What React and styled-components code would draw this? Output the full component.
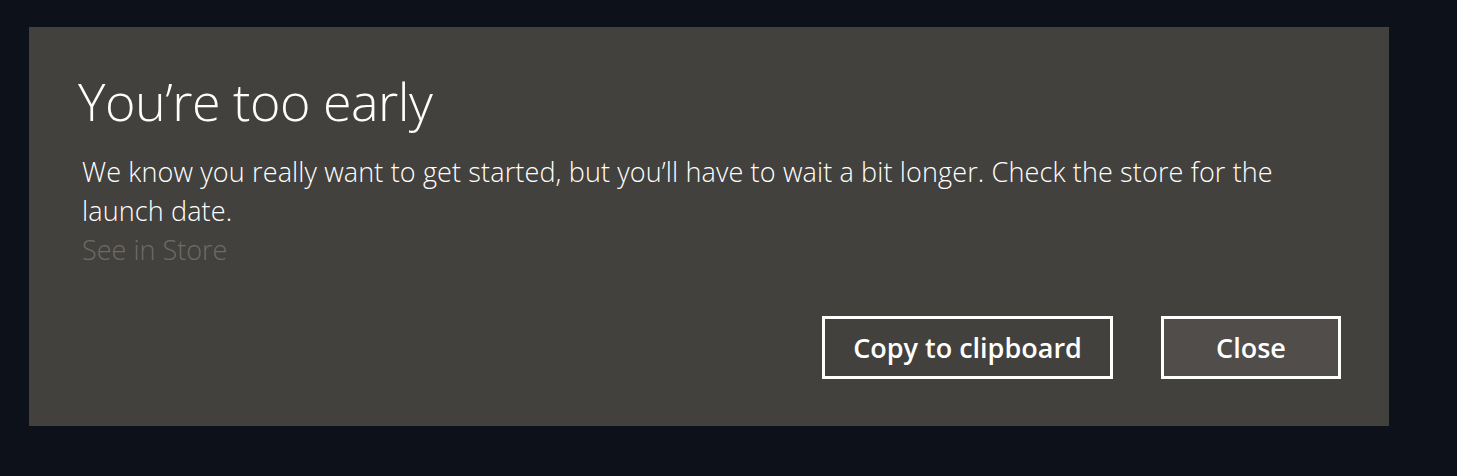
import styled, { createGlobalStyle } from "styled-components";

const GlobalStyle = createGlobalStyle`
  html, body {
    margin: 0;
    padding: 0;
    background: #0d1119;
  }
  body {
    font-family: "Open Sans", "Noto Sans", sans-serif;
  }
`;

const Page = styled.div`
  width: 1457px;
  height: 476px;
  padding: 27px 0 0 29px;
  box-sizing: border-box;
  background: #0d1119;
`;

const Dialog = styled.div`
  width: 1360px;
  height: 399px;
  box-sizing: border-box;
  background: #43413d;
  padding: 42px 48px 0 49px;
  display: flex;
  flex-direction: column;
`;

const Title = styled.h1`
  margin: 0;
  font-family: "Open Sans", sans-serif;
  font-weight: 300;
  font-size: 52px;
  line-height: 64px;
  color: #ffffff;
  letter-spacing: -0.5px;
`;

const Body = styled.div`
  margin: 19px 0 0 4px;
  display: flex;
  flex-direction: column;
`;

const Message = styled.p`
  margin: 0;
  font-weight: 300;
  font-size: 27px;
  line-height: 39px;
  letter-spacing: 0.13px;
  color: #ffffff;
  max-width: 1210px;
`;

const StoreLink = styled.a`
  font-weight: 300;
  font-size: 27px;
  line-height: 39px;
  color: #6d6b67;
  text-decoration: none;
`;

const Actions = styled.div`
  margin-top: auto;
  margin-bottom: 47px;
  display: flex;
  justify-content: flex-end;
  gap: 48px;
`;

const Button = styled.button`
  height: 63px;
  width: ${(props) => props.$width}px;
  box-sizing: border-box;
  border: 3px solid #ffffff;
  background: ${(props) => (props.$accent ? "#514d4a" : "#43413d")};
  color: #ffffff;
  font-family: "Open Sans", sans-serif;
  font-weight: 600;
  font-size: 27px;
  padding: 0;
  cursor: pointer;
`;

export default function App() {
  return (
    <>
      <GlobalStyle />
      <Page>
        <Dialog>
          <Title>You’re too early</Title>
          <Body>
            <Message>
              We know you really want to get started, but you’ll have to wait
              a bit longer. Check the store for the launch date.
            </Message>
            <StoreLink>See in Store</StoreLink>
          </Body>
          <Actions>
            <Button $width={291}>Copy to clipboard</Button>
            <Button $width={180} $accent>
              Close
            </Button>
          </Actions>
        </Dialog>
      </Page>
    </>
  );
}
